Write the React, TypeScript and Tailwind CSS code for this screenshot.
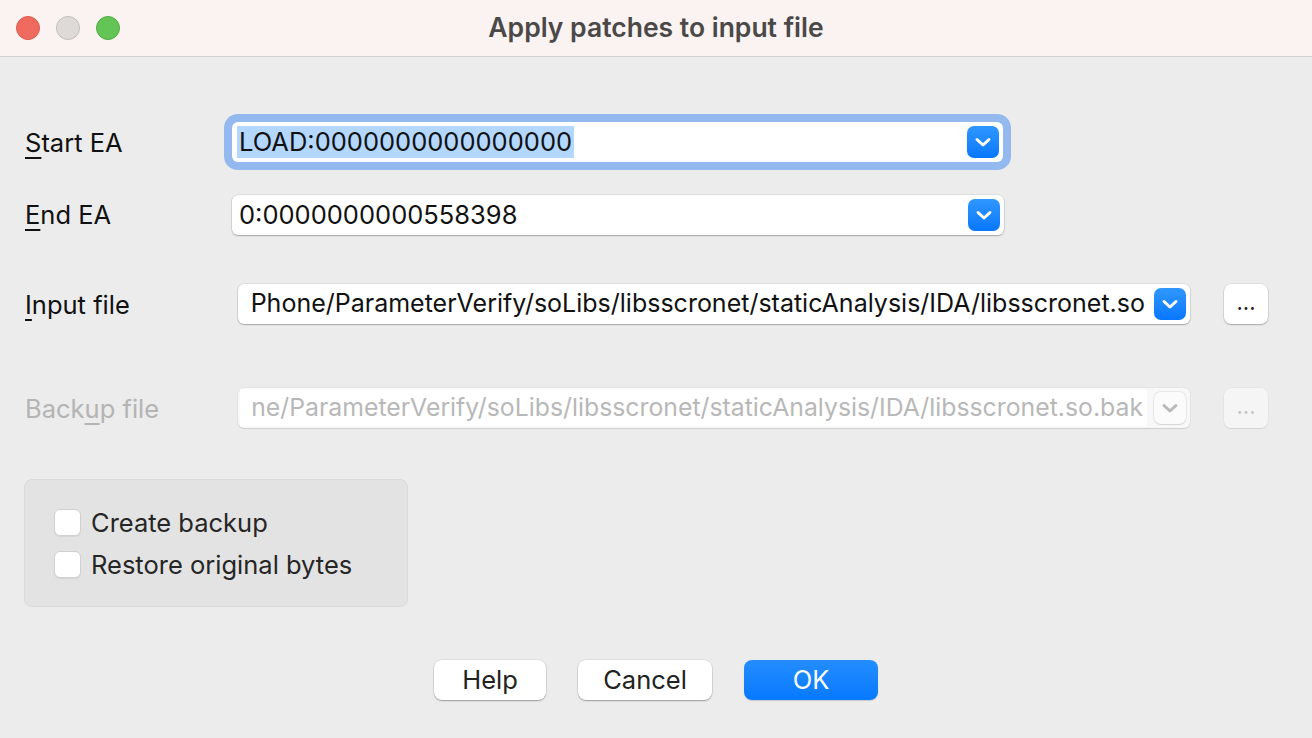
import React from 'react'

const font = { fontFamily: 'Inter, "Liberation Sans", sans-serif' }

function Chevron({ disabled }: { disabled?: boolean }) {
    return (
        <div
            className={
                disabled
                    ? 'flex h-[32px] w-[32px] shrink-0 items-center justify-center rounded-[7px] bg-[#fbfbfb] shadow-[0_0_0_1px_rgba(0,0,0,0.06),0_1px_1px_rgba(0,0,0,0.08)]'
                    : 'flex h-[32px] w-[32px] shrink-0 items-center justify-center rounded-[7px] bg-gradient-to-b from-[#2f97ff] to-[#0677ff]'
            }
        >
            <svg width="32" height="32" viewBox="0 0 32 32">
                <path
                    d="M10 13.5 L16 19 L22 13.5"
                    fill="none"
                    stroke={disabled ? '#b9b9b9' : '#ffffff'}
                    strokeWidth="3"
                    strokeLinecap="round"
                    strokeLinejoin="round"
                />
            </svg>
        </div>
    )
}

function Underlined({ text, at, className }: { text: string; at: number; className?: string }) {
    return (
        <span className={className}>
            {text.slice(0, at)}
            <span className="underline decoration-[1.5px] underline-offset-[5px]">{text[at]}</span>
            {text.slice(at + 1)}
        </span>
    )
}

function Checkbox({ label }: { label: string }) {
    return (
        <div className="flex h-[27px] items-center gap-[10px]">
            <div className="h-[27px] w-[27px] shrink-0 rounded-[6px] border border-[#d0d0d0] bg-white shadow-[0_1px_1px_rgba(0,0,0,0.06)]" />
            <span className="text-[25.5px] leading-[27px] text-[#262626]">{label}</span>
        </div>
    )
}

export default function App() {
    return (
        <div className="flex h-[738px] w-[1312px] flex-col overflow-hidden bg-[#ececec]" style={font}>
            {/* title bar */}
            <div className="grid h-[57px] shrink-0 grid-cols-[1fr_auto_1fr] items-center border-b border-[#d6d2d0] bg-[#faf3f1]">
                <div className="flex items-center gap-[16px] pl-[16px]">
                    <div className="h-[24px] w-[24px] rounded-full border border-[#dc5b51] bg-[#ef6a5f]" />
                    <div className="h-[24px] w-[24px] rounded-full border border-[#c2bdba] bg-[#dedad7]" />
                    <div className="h-[24px] w-[24px] rounded-full border border-[#53aa46] bg-[#62c555]" />
                </div>
                <div className="text-[26.5px] font-semibold text-[#4b4848]">Apply patches to input file</div>
                <div />
            </div>

            {/* Start EA */}
            <div className="mt-[57px] flex h-[56px] items-center">
                <Underlined text="Start EA" at={0} className="w-[232px] pl-[25px] pt-[2px] text-[25.5px] text-[#111]" />
                <div className="flex h-[40px] w-[771px] items-center rounded-[6px] bg-white pl-[5px] pr-[4px] shadow-[0_0_0_8px_#93b9ee]">
                    <span className="bg-[#b3d7ff] px-[2px] text-[25.5px] leading-[32px] text-[#111]">LOAD:0000000000000000</span>
                    <div className="flex-1" />
                    <Chevron />
                </div>
            </div>

            {/* End EA */}
            <div className="mt-[25px] flex h-[40px] items-center">
                <Underlined text="End EA" at={0} className="w-[232px] pl-[25px] text-[25.5px] text-[#111]" />
                <div className="flex h-[40px] w-[772px] items-center rounded-[6px] bg-white pl-[7px] pr-[4px] shadow-[0_0_0_0.5px_rgba(0,0,0,0.12),0_1px_1.5px_rgba(0,0,0,0.25)]">
                    <span className="text-[25.5px] text-[#111]">0:0000000000558398</span>
                    <div className="flex-1" />
                    <Chevron />
                </div>
            </div>

            {/* Input file */}
            <div className="mt-[48px] flex h-[41px] items-center">
                <Underlined text="Input file" at={0} className="w-[238px] pl-[25px] pt-[4px] text-[25.5px] text-[#111]" />
                <div className="flex h-[40px] w-[952px] items-center rounded-[6px] bg-white pl-[2px] pr-[4px] shadow-[0_0_0_0.5px_rgba(0,0,0,0.12),0_1px_1.5px_rgba(0,0,0,0.25)]">
                    <div className="flex min-w-0 flex-1 justify-end overflow-hidden pr-[9px]">
                        <span className="whitespace-nowrap text-[25px] text-[#111]">
                            Phone/ParameterVerify/soLibs/libsscronet/staticAnalysis/IDA/libsscronet.so
                        </span>
                    </div>
                    <Chevron />
                </div>
                <div className="ml-[34px] flex h-[40px] w-[44px] items-center justify-center rounded-[7px] bg-white pb-[2px] text-[22px] text-[#222] shadow-[0_0_0_0.5px_rgba(0,0,0,0.1),0_1px_1.5px_rgba(0,0,0,0.25)]">
                    ...
                </div>
            </div>

            {/* Backup file */}
            <div className="mt-[63px] flex h-[41px] items-center">
                <Underlined text="Backup file" at={4} className="w-[238px] pl-[25px] pt-[4px] text-[25.5px] text-[#b4b4b4]" />
                <div className="flex h-[40px] w-[952px] items-center rounded-[6px] bg-[#f8f8f8] pl-[2px] pr-[4px] shadow-[0_0_0_0.5px_rgba(0,0,0,0.06),0_1px_1px_rgba(0,0,0,0.1)]">
                    <div className="flex min-w-0 flex-1 justify-end overflow-hidden bg-white pr-[4px]">
                        <span className="whitespace-nowrap text-[24.8px] text-[#b8b8b8]">
                            ne/ParameterVerify/soLibs/libsscronet/staticAnalysis/IDA/libsscronet.so.bak
                        </span>
                    </div>
                    <div className="w-[7px]" />
                    <Chevron disabled />
                </div>
                <div className="ml-[34px] flex h-[40px] w-[44px] items-center justify-center rounded-[7px] bg-[#f5f5f5] pb-[2px] text-[22px] text-[#c6c6c6] shadow-[0_0_0_0.5px_rgba(0,0,0,0.05),0_1px_1px_rgba(0,0,0,0.08)]">
                    ...
                </div>
            </div>

            {/* options group */}
            <div className="ml-[24px] mt-[51px] flex h-[128px] w-[384px] flex-col gap-[15px] rounded-[8px] border border-[#dadada] bg-[#e3e3e3] pl-[29px] pt-[29px]">
                <Checkbox label="Create backup" />
                <Checkbox label="Restore original bytes" />
            </div>

            {/* buttons */}
            <div className="mt-[53px] flex justify-center gap-[32px]">
                <button className="h-[40px] w-[112px] rounded-[8px] bg-white text-[25.5px] text-[#222] shadow-[0_0_0_0.5px_rgba(0,0,0,0.1),0_1px_1.5px_rgba(0,0,0,0.3)]">
                    Help
                </button>
                <button className="h-[40px] w-[134px] rounded-[8px] bg-white text-[25.5px] text-[#222] shadow-[0_0_0_0.5px_rgba(0,0,0,0.1),0_1px_1.5px_rgba(0,0,0,0.3)]">
                    Cancel
                </button>
                <button className="h-[40px] w-[134px] rounded-[8px] bg-gradient-to-b from-[#238dff] to-[#0679ff] text-[25.5px] text-white shadow-[0_1px_1px_rgba(0,0,0,0.15)]">
                    OK
                </button>
            </div>
        </div>
    )
}
